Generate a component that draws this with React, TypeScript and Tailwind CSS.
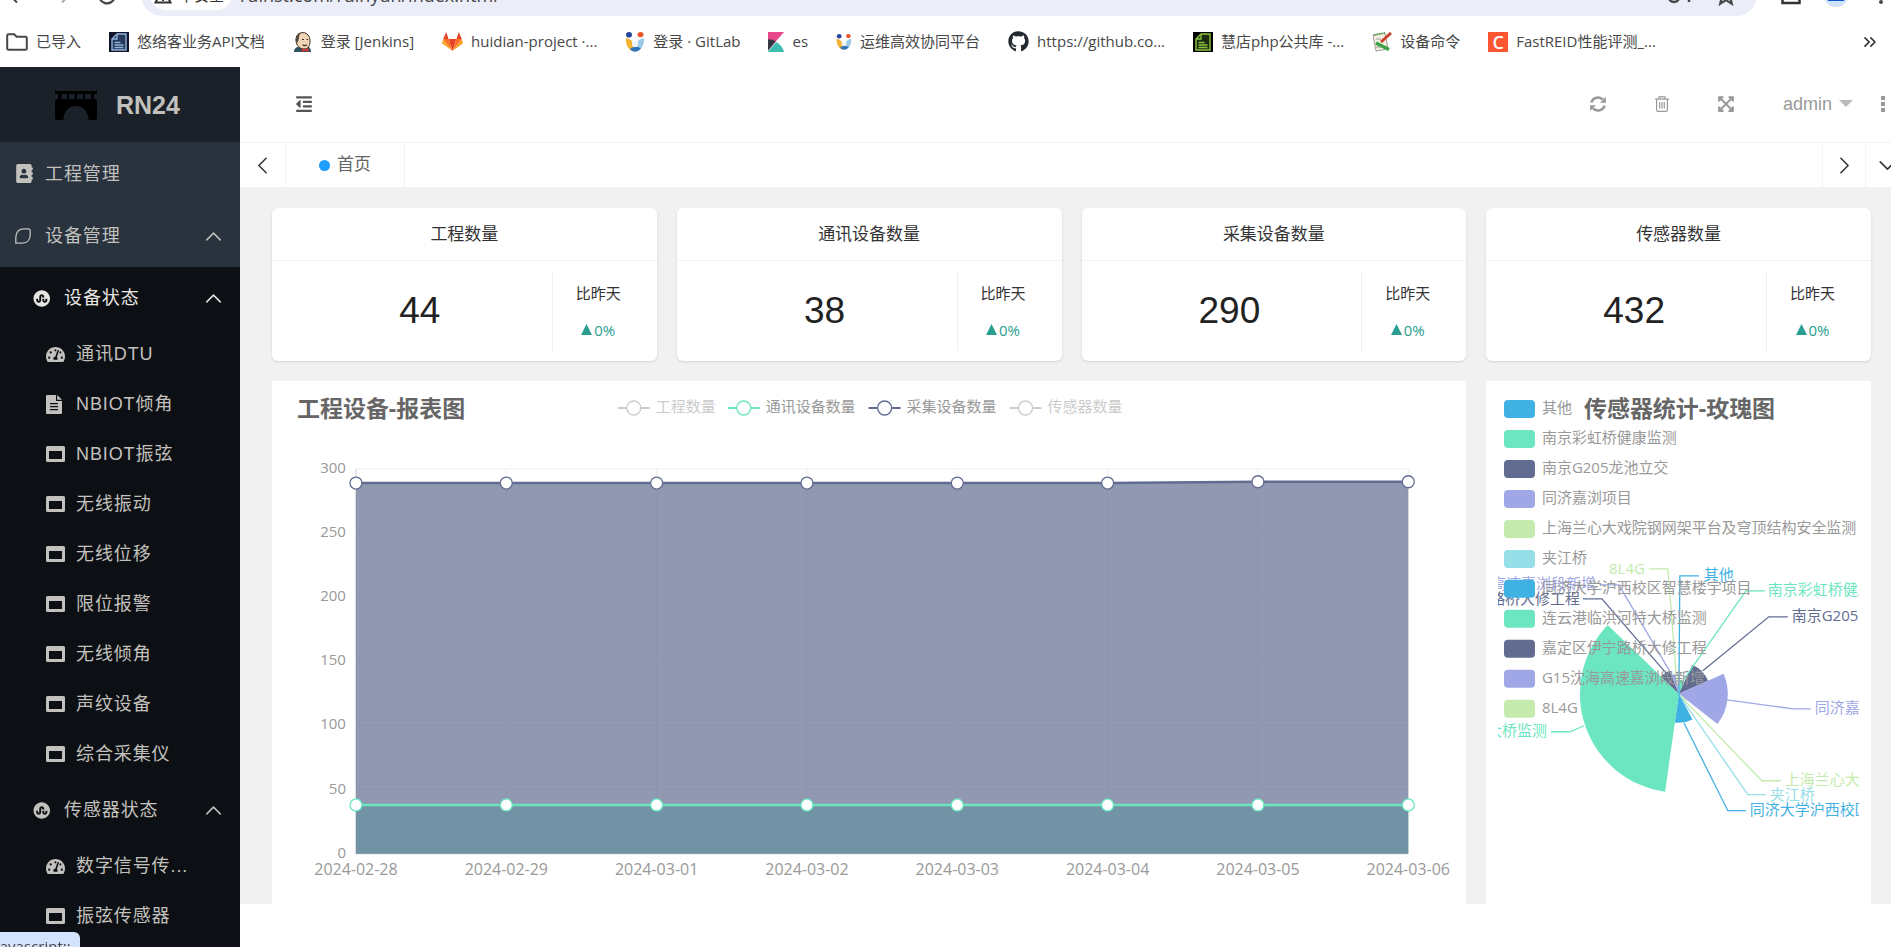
import { useState } from "react"
import type { ReactNode } from "react"
import {
  FaAddressBook,
  FaExpandArrowsAlt,
  FaGithub,
  FaOutdent,
  FaStumbleuponCircle,
  FaTachometerAlt,
} from "react-icons/fa"
import { ChevronDown, ChevronLeft, ChevronRight, ChevronUp, ChevronsRight } from "lucide-react"

const blue = "#3fb1e3"
const mint = "#6be6c1"
const navy = "#626c91"
const lilac = "#a0a7e6"
const lime = "#c4ebad"
const aqua = "#96dee8"

/* ---------- Icons ---------- */

function WindowIcon() {
  return (
    <svg viewBox="0 0 19 16" className="h-4 w-[19px]" fill="currentColor">
      <path
        fillRule="evenodd"
        d="M1.5 0h16A1.5 1.5 0 0 1 19 1.500v13a1.500 1.500 0 0 1-1.500 1.500h-16A1.500 1.500 0 0 1 0 14.500v-13A1.500 1.500 0 0 1 1.500 0ZM3 5v8h13V5H3Z"
      />
    </svg>
  )
}

function FileIcon() {
  return (
    <svg viewBox="0 0 16 19" className="h-[19px] w-4" fill="currentColor">
      <path
        fillRule="evenodd"
        d="M1 0h9v6h6v12a1 1 0 0 1-1 1H1a1 1 0 0 1-1-1V1a1 1 0 0 1 1-1ZM4 8v1.200h8V8H4Zm0 3v1.200h8V11H4Zm0 3v1.200h8V14H4Z"
      />
      <path d="M11.200 0 16 4.800h-4.800V0Z" />
    </svg>
  )
}

function LeafIcon() {
  return (
    <svg viewBox="0 0 16 16" className="h-4 w-4" fill="none" stroke="currentColor" strokeWidth="1.300">
      <path d="M.8 15.200V9.500C.8 3.800 4 .8 9 .8h4.200c1.200 0 2 .8 2 2V6.500c0 5.500-3 8.700-8 8.700H.8Z" />
    </svg>
  )
}

function BridgeIcon() {
  return (
    <svg viewBox="0 0 42 29" className="h-[29px] w-[42px]" fill="#000">
      <path d="M0 0h42v3H0zM3 3h3.500v5H3zM12 3h2v5h-2zM19.500 3h2.500v5h-2.500zM28 3h2v5h-2zM36 3h3v5h-3z" />
      <path d="M2 8h38a2 2 0 0 1 2 2v17a2 2 0 0 1-2 2h-6.500c0-8-5-14-12.500-14S8.500 21 8.500 29H2a2 2 0 0 1-2-2V10a2 2 0 0 1 2-2Z" />
    </svg>
  )
}

function RefreshIcon() {
  return (
    <svg viewBox="0 0 16 16" className="h-4 w-4" fill="none" stroke="currentColor" strokeWidth="2.600">
      <path d="M1.400 6.500A6.800 6.800 0 0 1 13 3.700" />
      <path d="M14.600 9.500A6.800 6.800 0 0 1 3 12.300" />
      <path d="M15.900 1v5.800h-5.800ZM.1 15V9.200h5.800Z" fill="currentColor" stroke="none" />
    </svg>
  )
}

function TrashIcon() {
  return (
    <svg viewBox="0 0 14 16" className="h-4 w-3.500" fill="none" stroke="currentColor" strokeWidth="1.200">
      <path d="M0 3.200h14M4 3V.8h6V3M1.600 3.500v10.400c0 .8.600 1.400 1.400 1.400h8c.8 0 1.400-.6 1.400-1.400V3.500M4.700 6v6.500M7 6v6.500M9.300 6v6.500" />
    </svg>
  )
}

function FolderIcon() {
  return (
    <svg viewBox="0 0 22 18" className="h-[18px] w-[22px]" fill="none" stroke="#474747" strokeWidth="2">
      <path d="M1.200 2.500c0-.8.500-1.300 1.300-1.300h5.700l2.400 2.500h8.900c.8 0 1.300.5 1.300 1.300v10.500c0 .8-.5 1.300-1.300 1.300h-17c-.8 0-1.300-.5-1.300-1.300Z" />
    </svg>
  )
}

function DocIcon({ bg, line, fill }: { bg: string; line: string; fill: string }) {
  return (
    <svg viewBox="0 0 20 20" className="h-5 w-5">
      <rect width="20" height="20" fill={bg} />
      <path d="M8 2h9v16H3V7Z" fill={fill} stroke={line} strokeWidth="1.400" />
      <path d="M8 2v5H3M5.500 10.500h6M5.500 13h9M5.500 15.500h9" fill="none" stroke={line} strokeWidth="1.300" />
    </svg>
  )
}

function JenkinsIcon() {
  return (
    <svg viewBox="0 0 20 20" className="h-5 w-5">
      <path d="M1 20c0-3 2-5 5-5l8-1c3 1 4 3 4 6Z" fill="#335061" />
      <path d="M3 8C3 3 6 .6 10 .6S17 4 17 9s-2 8-6 8-8-3-8-9Z" fill="#f0d6b7" stroke="#3a3027" strokeWidth="1" />
      <path d="M2.800 9C2.500 4 5 1.200 8 .8 6 3 6 5 5.800 7c-.2 1.500-1 2-1.300 4Z" fill="#54483b" />
      <path d="M9 7.500h2M13.500 7.500h1.500M9.500 12.800c1.500 1 3 1 4.500 0" stroke="#3a3027" strokeWidth="1.200" fill="none" />
      <path d="m9 16 3 1.500 3.500-1.500v4L12 18.700 9 20Z" fill="#d33833" />
    </svg>
  )
}

function GitlabIcon() {
  return (
    <svg viewBox="0 0 21 19" className="h-[19px] w-[21px]">
      <path d="M10.500 19 14.400 7H6.600Z" fill="#e24329" />
      <path d="M10.500 19 6.600 7H1.200ZM10.500 19l3.900-12h5.400Z" fill="#fc6d26" />
      <path d="M1.200 7 0 10.700c-.1.400 0 .7.300.9L10.500 19ZM19.800 7l1.200 3.700c.1.400 0 .7-.3.900L10.500 19Z" fill="#fca326" />
      <path d="M1.200 7h5.400L4.200 0ZM19.800 7h-5.400l2.400-7Z" fill="#e24329" />
    </svg>
  )
}

function MaskIcon({ small }: { small?: boolean }) {
  return (
    <svg viewBox="0 0 20 20" className={small ? "h-4 w-4" : "h-5 w-5"}>
      <ellipse cx="4" cy="2.800" rx="3" ry="2.800" fill="#27479b" />
      <ellipse cx="15.500" cy="2.600" rx="3" ry="2.600" fill="#e8562a" />
      <path d="M.8 6.500C3 5.500 6 9 10 10.500L9.500 19.700C4 18.500.8 14 .8 6.500Z" fill="#f6b331" />
      <path d="M19.200 6.500C16.500 5.500 14 9 10 10.500l-.5 9.200c6-.7 9.700-5.200 9.700-13.200Z" fill="#9ccbe9" />
      <path d="M7 8.500c1.500 1.500 4.500 1.500 6 0v5c-1.500 2-4.500 2-6 0Z" fill="#eef3f7" />
      <path d="M5 17c3-2.500 8-2.500 11-.5-3 3.500-8 4.500-11 .5Z" fill="#2f73b9" />
    </svg>
  )
}

function KibanaIcon() {
  return (
    <svg viewBox="0 0 16 20" className="h-5 w-4">
      <path d="M0 0h16L0 18.500Z" fill="#e8478b" />
      <path d="M0 7.200c3 0 5.500.8 7.800 2.300L0 18.500Z" fill="#343741" />
      <path d="M8.300 9.900C12.500 12.500 15.300 16 16 20H0v-.5Z" fill="#3ebeb0" />
    </svg>
  )
}

function NotepadIcon() {
  return (
    <svg viewBox="0 0 20 20" className="h-5 w-5">
      <path d="m1 3 12-2 3 16-12 2Z" fill="#f3efe2" stroke="#8d8a7c" strokeWidth=".8" />
      <path d="m2 3 11-2" stroke="#5aa05a" strokeWidth="2" strokeDasharray="1.500 1" />
      <path d="M19 1 9 10" stroke="#c8402b" strokeWidth="3" />
      <path d="m4 11 13 6.500" stroke="#3aa345" strokeWidth="3.500" />
      <path d="M4 7h5M4 15h5" stroke="#888" strokeWidth=".8" />
    </svg>
  )
}

/* ---------- Browser bar ---------- */

const bookmarks: { label: string; icon: ReactNode }[] = [
  { label: "已导入", icon: <FolderIcon /> },
  { label: "悠络客业务API文档", icon: <DocIcon bg="#10142a" line="#8fb2da" fill="#27395a" /> },
  { label: "登录 [Jenkins]", icon: <JenkinsIcon /> },
  { label: "huidian-project ·...", icon: <GitlabIcon /> },
  { label: "登录 · GitLab", icon: <MaskIcon /> },
  { label: "es", icon: <KibanaIcon /> },
  { label: "运维高效协同平台", icon: <MaskIcon small /> },
  { label: "https://github.co...", icon: <FaGithub className="h-[21px] w-[21px] text-[#24292f]" /> },
  { label: "慧店php公共库 -...", icon: <DocIcon bg="#000" line="#8bc53f" fill="#1c2a10" /> },
  { label: "设备命令", icon: <NotepadIcon /> },
  {
    label: "FastREID性能评测_...",
    icon: (
      <span className="flex h-5 w-5 items-center justify-center bg-[#fc5531] text-lg leading-5 font-semibold text-white">
        C
      </span>
    ),
  },
]

function BrowserBar() {
  return (
    <div className="bg-white font-['Open_Sans','Noto_Sans_CJK_SC',sans-serif]">
      <div className="flex h-4 items-end overflow-hidden">
        <div className="flex h-[42px] w-full shrink-0 items-center">
          <div className="flex w-[141px] shrink-0 items-center gap-[25px] pl-[7px] text-[#474747]">
            <svg viewBox="0 0 20 20" className="h-5 w-5" fill="none" stroke="currentColor" strokeWidth="2">
              <path d="M18 10H3M10 2.500 2.500 10l7.500 7.500" />
            </svg>
            <svg viewBox="0 0 20 20" className="h-5 w-5" fill="none" stroke="#aaa" strokeWidth="2">
              <path d="M2 10h15M10 2.500l7.500 7.500-7.500 7.500" />
            </svg>
            <svg viewBox="0 0 20 20" className="h-5 w-5" fill="none" stroke="currentColor" strokeWidth="2.200">
              <path d="M16 5a8 8 0 1 0 2 6M18 2v5h-5" />
            </svg>
          </div>
          <div className="flex h-full flex-1 items-center rounded-full bg-[#ebeef8] pr-5 pl-[9px]">
            <span className="flex h-[30px] items-center gap-[7px] rounded-full bg-white px-[4px] text-[15px] text-[#333]">
              <svg viewBox="0 0 18 18" className="h-[18px] w-[18px]" fill="none" stroke="currentColor" strokeWidth="2">
                <path d="M9 2 1.500 16.500h15ZM9 7v4M9 13v2" />
              </svg>
              <span className="pr-1">不安全</span>
            </span>
            <input
              aria-label="地址"
              className="ml-2 h-9 flex-1 bg-transparent text-lg text-[#474747] outline-none"
              defaultValue="ruinst.com/ruinyun/index.html"
            />
            <svg viewBox="0 0 24 20" className="h-5 w-6 text-[#474747]" fill="none" stroke="currentColor" strokeWidth="2.500">
              <circle cx="7" cy="12" r="5" />
              <path d="M12 11h10v6M17 11v4" />
            </svg>
            <svg viewBox="0 0 20 20" className="ml-6 h-[22px] w-[22px] text-[#474747]" fill="none" stroke="currentColor" strokeWidth="2">
              <path d="m10 2 2.400 5.500 6 .5-4.600 4 1.500 6-5.300-3.300L4.700 18l1.500-6-4.600-4 6-.5Z" />
            </svg>
          </div>
          <div className="flex shrink-0 items-center gap-[23px] pl-6">
            <svg viewBox="0 0 20 20" className="h-5 w-5 text-[#333]" fill="none" stroke="currentColor" strokeWidth="2.500">
              <path d="M1.500 2h17v16h-17Z" />
              <path d="M11 2h7v10h-7Z" fill="currentColor" />
            </svg>
            <span className="flex h-6 w-6 items-center justify-center rounded-full bg-[#cfe2fb]">
              <span className="h-3 w-4 bg-[#0b57d0]" />
            </span>
            <svg viewBox="0 0 20 20" className="h-5 w-5" fill="#474747">
              <circle cx="10" cy="3" r="2" />
              <circle cx="10" cy="10" r="2" />
              <circle cx="10" cy="17" r="2" />
            </svg>
          </div>
        </div>
      </div>
      <div className="flex h-[51px] items-center justify-between pr-[11px] pl-[6px]">
        <nav className="flex items-center gap-7 text-[15px] whitespace-nowrap text-[#474747]">
          {bookmarks.map((b) => (
            <a key={b.label} href="#" className="flex items-center gap-2">
              {b.icon}
              <span>{b.label}</span>
            </a>
          ))}
        </nav>
        <button aria-label="更多书签">
          <ChevronsRight size={20} className="text-[#333]" />
        </button>
      </div>
    </div>
  )
}

/* ---------- Sidebar ---------- */

const deviceItems = [
  { label: "通讯DTU", icon: <FaTachometerAlt size={19} /> },
  { label: "NBIOT倾角", icon: <FileIcon /> },
  { label: "NBIOT振弦", icon: <WindowIcon /> },
  { label: "无线振动", icon: <WindowIcon /> },
  { label: "无线位移", icon: <WindowIcon /> },
  { label: "限位报警", icon: <WindowIcon /> },
  { label: "无线倾角", icon: <WindowIcon /> },
  { label: "声纹设备", icon: <WindowIcon /> },
  { label: "综合采集仪", icon: <WindowIcon /> },
]

const sensorItems = [
  { label: "数字信号传...", icon: <FaTachometerAlt size={19} /> },
  { label: "振弦传感器", icon: <WindowIcon /> },
]

function SubMenu({
  title,
  items,
  active,
}: {
  title: string
  items: { label: string; icon: ReactNode }[]
  active?: boolean
}) {
  const [open, setOpen] = useState(true)

  return (
    <div>
      <button
        onClick={() => setOpen(!open)}
        className={`flex h-[62px] w-full items-center pr-[13px] pl-[33px] tracking-wider ${active ? "text-[#e8e6e3]" : "text-[#c3c1be]"}`}
      >
        <FaStumbleuponCircle size={17} />
        <span className="ml-[14px] flex-1 text-left">{title}</span>
        <ChevronUp size={27} strokeWidth={1.3} />
      </button>
      {open && (
        <ul>
          {items.map((item) => (
            <li key={item.label}>
              <a href="#" className="flex h-[50px] items-center gap-[11px] pl-[46px] tracking-wider text-[#c3c1be]">
                <span className="w-[19px]">{item.icon}</span>
                {item.label}
              </a>
            </li>
          ))}
        </ul>
      )}
    </div>
  )
}

function Sidebar() {
  return (
    <aside className="w-60 shrink-0 overflow-hidden bg-[#0c0f13] text-lg text-[#c3c1be]">
      <div className="flex h-[75px] items-center gap-[19px] bg-[#1b2128] pt-[2px] pl-[55px]">
        <BridgeIcon />
        <span className="text-[25px] font-bold">RN24</span>
      </div>
      <div className="bg-[#28333e]">
        <a href="#" className="flex h-[63px] items-center gap-[11px] pl-[15px] tracking-wider">
          <FaAddressBook size={19} />
          工程管理
        </a>
        <button className="flex h-[62px] w-full items-center pr-[13px] pl-[15px] tracking-wider">
          <LeafIcon />
          <span className="ml-[14px] flex-1 text-left">设备管理</span>
          <ChevronUp size={27} strokeWidth={1.3} />
        </button>
      </div>
      <SubMenu title="设备状态" items={deviceItems} active />
      <SubMenu title="传感器状态" items={sensorItems} />
    </aside>
  )
}

/* ---------- Stat cards ---------- */

const stats = [
  { title: "工程数量", value: 44 },
  { title: "通讯设备数量", value: 38 },
  { title: "采集设备数量", value: 290 },
  { title: "传感器数量", value: 432 },
]

function StatCard({ title, value }: { title: string; value: number }) {
  return (
    <div className="rounded-md bg-white shadow-sm">
      <h2 className="border-b border-[#f3f3f3] pt-[2px] text-center text-[17px] leading-[50px] text-[#333]">{title}</h2>
      <div className="flex py-[10px] pr-[13px] pl-4">
        <div className="flex-1 border-r border-[#eee] text-center text-[37px] leading-[80px] text-[#222]">{value}</div>
        <div className="flex w-[91px] flex-col items-center justify-center gap-[13px] font-['Open_Sans','Noto_Sans_CJK_SC',sans-serif] text-[15px] leading-6">
          <span className="text-[#333]">比昨天</span>
          <span className="flex items-center gap-[2px] text-[#299e90]">
            <svg viewBox="0 0 11 11" className="h-[11px] w-[11px]" fill="currentColor">
              <path d="M5.500 0 11 11H0Z" />
            </svg>
            0%
          </span>
        </div>
      </div>
    </div>
  )
}

/* ---------- Line chart ---------- */

const days = [
  "2024-02-28",
  "2024-02-29",
  "2024-03-01",
  "2024-03-02",
  "2024-03-03",
  "2024-03-04",
  "2024-03-05",
  "2024-03-06",
]
const collectors = [289, 289, 289, 289, 289, 289, 290, 290]
const comms = [38, 38, 38, 38, 38, 38, 38, 38]

const plot = { left: 84, right: 1137, top: 88, bottom: 473 }
const px = (i: number) => plot.left + (i * (plot.right - plot.left)) / 7
const py = (v: number) => plot.bottom - (v * (plot.bottom - plot.top)) / 300

const toPoints = (values: number[]) => values.map((v, i) => `${px(i)},${py(v)}`).join(" ")

const chartLegend = [
  { label: "工程数量", x: 346, color: "#ccc", text: "#ccc" },
  { label: "通讯设备数量", x: 456, color: mint, text: "#999" },
  { label: "采集设备数量", x: 597, color: navy, text: "#999" },
  { label: "传感器数量", x: 738, color: "#ccc", text: "#ccc" },
]

function LineChart() {
  const base = `${plot.right},${plot.bottom} ${plot.left},${plot.bottom}`

  return (
    <svg viewBox="0 0 1195 523" className="block w-full" fontSize="15" role="img" aria-label="工程设备-报表图">
      <text x="25" y="36" fontSize="23" fontWeight="bold" fill="#666">
        工程设备-报表图
      </text>
      {chartLegend.map((l) => (
        <g key={l.label}>
          <path d={`M${l.x} 27h32`} stroke={l.color} strokeWidth="2" />
          <circle cx={l.x + 16} cy="27" r="7" fill="#fff" stroke={l.color} strokeWidth="1.300" />
          <text x={l.x + 38} y="31" fill={l.text}>
            {l.label}
          </text>
        </g>
      ))}

      {[0, 50, 100, 150, 200, 250, 300].map((v) => (
        <g key={v}>
          <path d={`M${plot.left} ${py(v)}H${plot.right}`} stroke="#eee" />
          <text x="74" y={py(v) + 4} textAnchor="end" fill="#999">
            {v}
          </text>
        </g>
      ))}
      {days.map((d, i) => (
        <g key={d}>
          <path d={`M${px(i)} ${plot.top}V${plot.bottom}`} stroke={i === 0 ? "#ccc" : "#eee"} />
          <text x={px(i)} y="494" fontSize="16" textAnchor="middle" fill="#999">
            {d}
          </text>
        </g>
      ))}
      <path d={`M${plot.left} ${plot.bottom}H${plot.right}`} stroke="#ccc" />

      <polygon points={`${toPoints(comms)} ${base}`} fill={mint} opacity="0.7" />
      <polygon points={`${toPoints(collectors)} ${base}`} fill={navy} opacity="0.7" />
      <polyline points={toPoints(comms)} fill="none" stroke={mint} strokeWidth="2.500" />
      <polyline points={toPoints(collectors)} fill="none" stroke={navy} strokeWidth="2.500" />
      {days.map((d, i) => (
        <g key={d} fill="#fff" strokeWidth="1.300">
          <circle cx={px(i)} cy={py(comms[i])} r="6" stroke={mint} />
          <circle cx={px(i)} cy={py(collectors[i])} r="6" stroke={navy} />
        </g>
      ))}
    </svg>
  )
}

/* ---------- Rose chart ---------- */

const roseLegend = [
  { label: "其他", color: blue },
  { label: "南京彩虹桥健康监测", color: mint },
  { label: "南京G205龙池立交", color: navy },
  { label: "同济嘉浏项目", color: lilac },
  { label: "上海兰心大戏院钢网架平台及穹顶结构安全监测", color: lime },
  { label: "夹江桥", color: aqua },
  { label: "同济大学沪西校区智慧楼宇项目", color: blue },
  { label: "连云港临洪河特大桥监测", color: mint },
  { label: "嘉定区伊宁路桥大修工程", color: navy },
  { label: "G15沈海高速嘉浏段新增", color: lilac },
  { label: "8L4G", color: lime },
]

// start / end in degrees clockwise from the top
const slices = [
  { start: 0, end: 4, r: 10, color: blue },
  { start: 4, end: 25, r: 14, color: mint },
  { start: 25, end: 66, r: 32, color: navy },
  { start: 66, end: 128, r: 49, color: lilac },
  { start: 128, end: 142, r: 10, color: lime },
  { start: 142, end: 152, r: 9, color: aqua },
  { start: 152, end: 188, r: 29, color: blue },
  { start: 188, end: 314, r: 99, color: mint },
  { start: 314, end: 338, r: 25, color: navy },
  { start: 338, end: 352, r: 20, color: lilac },
  { start: 352, end: 360, r: 10, color: lime },
]

const callouts = [
  { label: "其他", color: blue, line: "M181 303 182 183h19", x: 206, y: 187 },
  { label: "南京彩虹桥健康监测", color: mint, line: "M185 288 248 198h19", x: 270, y: 202 },
  { label: "南京G205龙池立交", color: navy, line: "M205 278 271 224h19", x: 294, y: 228 },
  { label: "同济嘉浏项目", color: lilac, line: "M229 307 295 316h18", x: 317, y: 320 },
  { label: "上海兰心大戏院钢网架平台及穹顶结构安全监测", color: lime, line: "M187 308 264 388h19", x: 287, y: 392 },
  { label: "夹江桥", color: aqua, line: "M186 309 250 402h18", x: 272, y: 407 },
  { label: "同济大学沪西校区智慧楼宇项目", color: blue, line: "M186 330 230 418h18", x: 252, y: 422 },
  { label: "连云港临洪河特大桥监测", color: mint, line: "M86 333 72 339H53", x: 49, y: 343, end: true },
  { label: "嘉定区伊宁路桥大修工程", color: navy, line: "M168 280 104 206H85", x: 82, y: 211, end: true },
  { label: "G15沈海高速嘉浏段新增", color: lilac, line: "M174 282 121 192h-19", x: 98, y: 196, end: true },
  { label: "8L4G", color: lime, line: "M179 291 170 176h-19", x: 147, y: 181, end: true },
]

const cx = 181
const cy = 301

const slicePath = (start: number, end: number, r: number) => {
  const at = (deg: number) => {
    const a = (deg * Math.PI) / 180
    return `${cx + r * Math.sin(a)} ${cy - r * Math.cos(a)}`
  }
  return `M${cx} ${cy}L${at(start)}A${r} ${r} 0 ${end - start > 180 ? 1 : 0} 1 ${at(end)}Z`
}

function RoseChart() {
  return (
    <svg viewBox="0 0 361 490" className="block w-full overflow-hidden" fontSize="15" role="img" aria-label="传感器统计-玫瑰图">
      {slices.map((s) => (
        <path key={s.start} d={slicePath(s.start, s.end, s.r)} fill={s.color} />
      ))}
      {callouts.map((c) => (
        <g key={c.label}>
          <path d={c.line} fill="none" stroke={c.color} strokeWidth="1.300" />
          <text x={c.x} y={c.y} fill={c.color} textAnchor={c.end ? "end" : "start"}>
            {c.label}
          </text>
        </g>
      ))}
      {roseLegend.map((l, i) => (
        <g key={l.label}>
          <rect x="6" y={7 + i * 30} width="31" height="18" rx="4" fill={l.color} />
          <text x="44" y={20 + i * 30} fill="#999">
            {l.label}
          </text>
        </g>
      ))}
      <text x="86" y="24" fontSize="23" fontWeight="bold" fill="#666">
        传感器统计-玫瑰图
      </text>
    </svg>
  )
}

/* ---------- Page ---------- */

function TopBar() {
  return (
    <header className="flex h-[75px] items-center justify-between bg-white pr-[3px] pb-[2px] pl-[55px] text-[#999]">
      <button aria-label="收起菜单">
        <FaOutdent size={18} className="text-[#555]" />
      </button>
      <div className="flex items-center text-lg">
        <button aria-label="刷新" className="mr-[49px]">
          <RefreshIcon />
        </button>
        <button aria-label="清理缓存" className="mr-12">
          <TrashIcon />
        </button>
        <button aria-label="全屏" className="mr-12">
          <FaExpandArrowsAlt size={18} />
        </button>
        <button className="mr-[25px] flex items-center gap-[7px]">
          admin
          <svg viewBox="0 0 14 7" className="h-[7px] w-[14px]" fill="#bbb">
            <path d="M0 0h14L7 7Z" />
          </svg>
        </button>
        <button aria-label="更多">
          <svg viewBox="0 0 10 16" className="h-4 w-[10px]" fill="currentColor">
            <path d="M3 0h4v4H3zM3 6h4v4H3zM3 12h4v4H3z" />
          </svg>
        </button>
      </div>
    </header>
  )
}

function TabBar() {
  return (
    <div className="flex h-[45px] overflow-hidden border-t border-[#f3f3f3] bg-white text-[#333]">
      <button aria-label="向左" className="flex w-[46px] shrink-0 items-center justify-center border-r border-[#f3f3f3]">
        <ChevronLeft size={29} strokeWidth={1.3} />
      </button>
      <a href="#" className="flex w-[119px] items-center justify-center gap-[7px] border-r border-[#f3f3f3] text-[17px] text-[#666]">
        <span className="h-[11px] w-[11px] rounded-full bg-[#1e9fff]" />
        首页
      </a>
      <button
        aria-label="向右"
        className="ml-auto flex w-11 shrink-0 items-center justify-center border-x border-[#f3f3f3]"
      >
        <ChevronRight size={29} strokeWidth={1.3} />
      </button>
      <button aria-label="标签操作" className="flex w-[25px] shrink-0 items-center pl-[7px]">
        <ChevronDown size={29} strokeWidth={1.3} className="shrink-0" />
      </button>
    </div>
  )
}

export default function App() {
  return (
    <div className="flex h-screen flex-col overflow-hidden bg-white font-['Liberation_Sans','Noto_Sans_CJK_SC',sans-serif]">
      <BrowserBar />
      <div className="flex min-h-0 flex-1">
        <Sidebar />
        <div className="min-w-0 flex-1 overflow-hidden">
          <TopBar />
          <TabBar />
          <main className="grid grid-cols-4 gap-5 bg-[#f1f1f1] pt-[21px] pr-5 pl-8">
            {stats.map((s) => (
              <StatCard key={s.title} title={s.title} value={s.value} />
            ))}
            <section className="col-span-3 bg-white font-['Open_Sans','Noto_Sans_CJK_SC',sans-serif]">
              <LineChart />
            </section>
            <section className="bg-white p-3 font-['Open_Sans','Noto_Sans_CJK_SC',sans-serif]">
              <RoseChart />
            </section>
          </main>
        </div>
      </div>

      {/* Link status bubble */}
      <div className="fixed bottom-0 left-0 h-[15px] w-20 overflow-hidden rounded-tr-md bg-[#d3e3fd] font-['Open_Sans',sans-serif] text-[15px] text-[#474747]">
        <span className="-ml-1 block leading-7">javascript:;</span>
      </div>
    </div>
  )
}
